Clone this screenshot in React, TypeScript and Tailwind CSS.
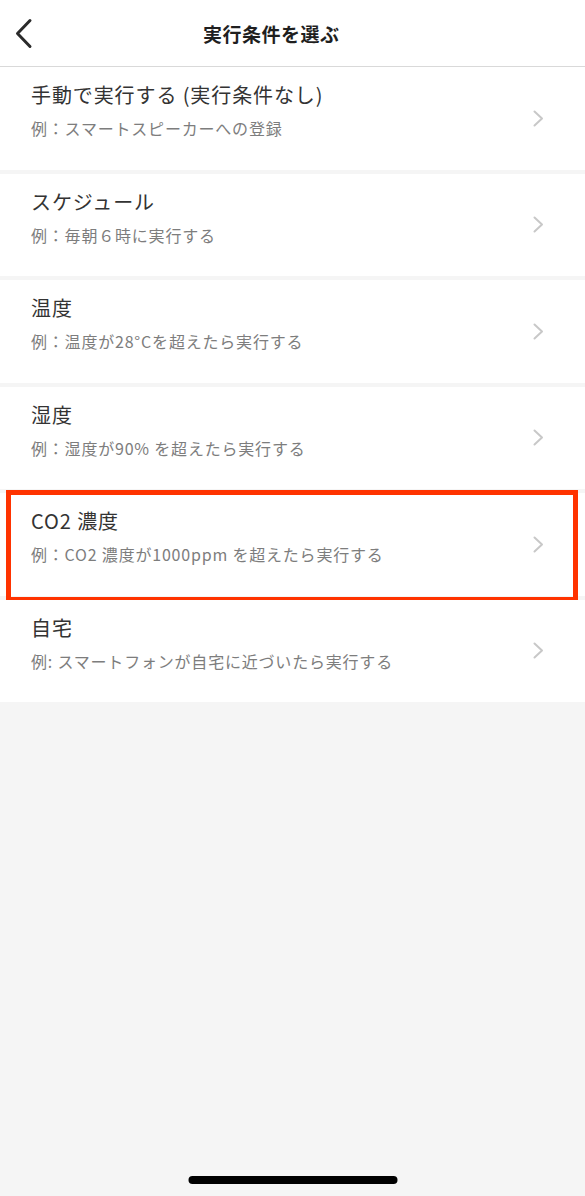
const conditions = [
  { title: "手動で実行する (実行条件なし)", example: "例：スマートスピーカーへの登録" },
  { title: "スケジュール", example: "例：毎朝６時に実行する" },
  { title: "温度", example: "例：温度が28°Cを超えたら実行する" },
  { title: "湿度", example: "例：湿度が90% を超えたら実行する" },
  { title: "CO2 濃度", example: "例：CO2 濃度が1000ppm を超えたら実行する", highlighted: true },
  { title: "自宅", example: "例: スマートフォンが自宅に近づいたら実行する" },
];

function BackIcon() {
  return (
    <svg width="20" height="31" viewBox="0 0 20 31" fill="none">
      <path d="M16 2.5 L3.5 15.5 L16 28.5" stroke="#2b2b2b" strokeWidth="3" strokeLinecap="round" strokeLinejoin="round" />
    </svg>
  );
}

function ChevronIcon() {
  return (
    <svg width="11" height="17" viewBox="0 0 11 17" fill="none" className="shrink-0 self-center">
      <path d="M1.5 1.5 L9 8.5 L1.5 15.5" stroke="#c8c8c8" strokeWidth="2" strokeLinecap="round" strokeLinejoin="round" />
    </svg>
  );
}

export default function App() {
  return (
    <div
      className="relative flex h-[1196px] w-[585px] flex-col overflow-hidden bg-[#f5f5f5]"
      style={{ fontFamily: '"Noto Sans CJK JP", "Noto Sans", sans-serif' }}
    >
      {/* Header */}
      <header className="flex h-[67px] shrink-0 items-center border-b border-[#d9d9d9] bg-white">
        <button className="ml-[12px] flex h-[40px] w-[24px] items-center justify-center" aria-label="戻る">
          <BackIcon />
        </button>
        <h1 className="ml-[167px] text-[19px] font-bold leading-none tracking-[0.5px] text-[#1f1f1f]">実行条件を選ぶ</h1>
      </header>

      {/* Condition list */}
      <ul className="flex flex-col gap-[4px]">
        {conditions.map((c) => (
          <li key={c.title} className="relative flex h-[102.5px] items-start bg-white pl-[31px] pr-[41px]">
            <div className="flex flex-1 flex-col pt-[15px]">
              <span className="text-[20px] leading-[26px] tracking-[0.9px] text-[#333333]">{c.title}</span>
              <span className="mt-[9px] text-[16px] leading-[22px] tracking-[0.8px] text-[#7d7d7d]">{c.example}</span>
            </div>
            <ChevronIcon />
            {c.highlighted && (
              <div className="pointer-events-none absolute -top-[3px] -bottom-[6px] left-[6px] right-[7px] border-[5px] border-[#ff3300]" />
            )}
          </li>
        ))}
      </ul>

      {/* Home indicator */}
      <div className="absolute bottom-[12px] left-1/2 h-[8px] w-[209px] -translate-x-1/2 rounded-full bg-black" />
    </div>
  );
}
